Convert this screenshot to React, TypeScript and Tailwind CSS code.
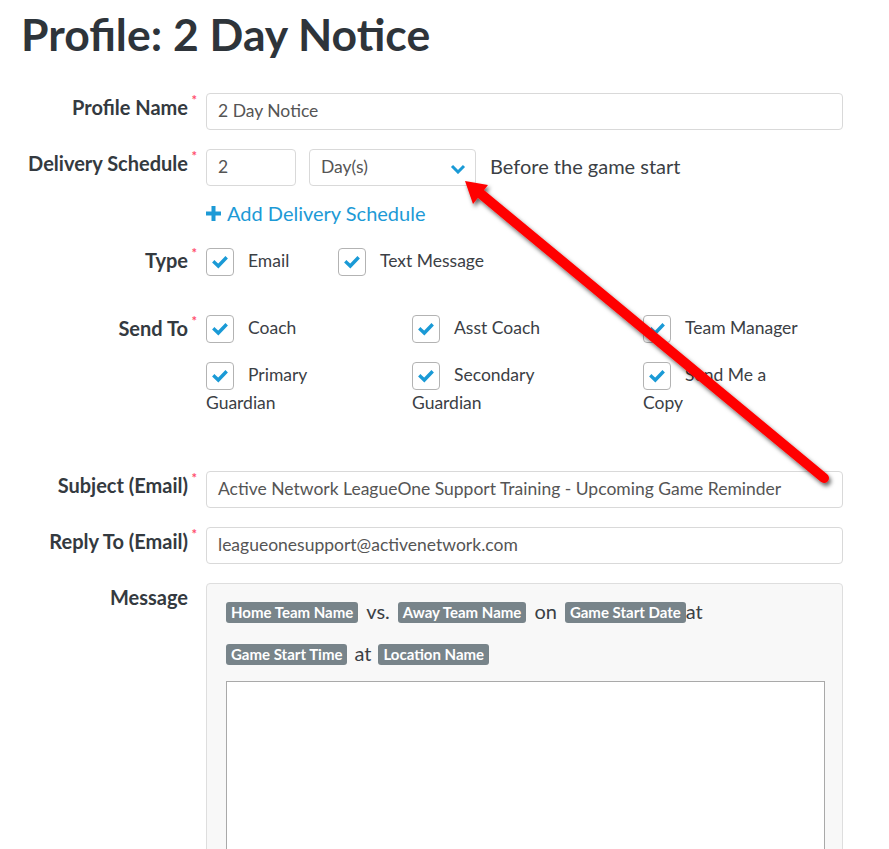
import React from "react";

const Star = () => (
  <span className="absolute right-[-9px] top-[-2px] text-[13px] leading-none text-[#ff4d6d]">*</span>
);

function Label({ text, req = true, pt = "pt-[7px]" }: { text: string; req?: boolean; pt?: string }) {
  return (
    <div className={`w-[188px] shrink-0 text-right ${pt}`}>
      <span className="relative inline-block text-[20px] leading-[22px] font-bold text-[#343a40]">
        {text}
        {req && <Star />}
      </span>
    </div>
  );
}

const Check = () => (
  <div className="flex h-[28px] w-[28px] shrink-0 items-center justify-center rounded-[4px] border border-[#b3b3b3] bg-white">
    <svg width="16" height="14" viewBox="0 0 16 14">
      <path d="M2.5 7.5 L6.3 11 L13.5 3.5" fill="none" stroke="#1a9ad6" strokeWidth="3.4" strokeLinecap="square" />
    </svg>
  </div>
);

function CheckItem({ a, b, w }: { a: string; b?: string; w: string }) {
  return (
    <div className={w}>
      <div className="flex items-center gap-[14px]">
        <Check />
        <span className="mt-[-3px] text-[17.5px] leading-[22px] text-[#3b4045]">{a}</span>
      </div>
      {b && <div className="mt-[2px] text-[17.5px] leading-[22px] text-[#3b4045]">{b}</div>}
    </div>
  );
}

const Tag = ({ t }: { t: string }) => (
  <span className="inline-flex h-[21px] items-center rounded-[3px] bg-[#78848a] px-[5px] text-[15px] font-bold text-white">
    {t}
  </span>
);

const inputCls =
  "h-[37px] rounded-[4px] border border-[#d9d9d9] bg-white px-[11px] flex items-center text-[17.5px] text-[#555]";

export default function App() {
  return (
    <div className="relative h-[849px] w-[889px] overflow-hidden bg-white font-['Lato',sans-serif] text-[#333]">
      <h1 className="pl-[21px] pt-[9px] text-[44.5px] font-bold leading-[50px] text-[#2e343a]">Profile: 2 Day Notice</h1>

      <div className="mt-[34px] pr-[46px]">
        {/* Profile Name */}
        <div className="flex">
          <Label text="Profile Name" pt="pt-[3px]" />
          <div className="ml-[18px] flex-1">
            <div className={inputCls}>2 Day Notice</div>
          </div>
        </div>

        {/* Delivery schedule */}
        <div className="mt-[19px] flex">
          <Label text="Delivery Schedule" pt="pt-[3px]" />
          <div className="ml-[18px] flex-1">
            <div className="flex items-center">
              <div className={`${inputCls} w-[90px]`}>2</div>
              <div className={`${inputCls} ml-[13px] w-[167px] justify-between`}>
                <span>Day(s)</span>
                <svg width="16" height="10" viewBox="0 0 16 10" className="mr-[-2px] mt-[2px]">
                  <path d="M2 2 L8 8 L14 2" fill="none" stroke="#1a9ad6" strokeWidth="3" />
                </svg>
              </div>
              <span className="ml-[14px] mt-[-4px] text-[20px] text-[#3b4045]">Before the game start</span>
            </div>
            <div className="mt-[16px] flex h-[22px] items-center text-[20px] leading-[22px] text-[#1d9ad6]">
              <svg width="15" height="15" viewBox="0 0 15 15" className="mr-[6px]">
                <path d="M7.5 0 V15 M0 7.5 H15" stroke="#1d9ad6" strokeWidth="4" />
              </svg>
              Add Delivery Schedule
            </div>
          </div>
        </div>

        {/* Type */}
        <div className="mt-[24px] flex">
          <Label text="Type" pt="pt-[1px]" />
          <div className="ml-[18px] flex flex-1">
            <CheckItem a="Email" w="w-[132px]" />
            <CheckItem a="Text Message" w="w-[200px]" />
          </div>
        </div>

        {/* Send To */}
        <div className="mt-[39px] flex">
          <Label text="Send To" pt="pt-[2px]" />
          <div className="ml-[18px] flex-1">
            <div className="flex">
              <CheckItem a="Coach" w="w-[206px]" />
              <CheckItem a="Asst Coach" w="w-[231px]" />
              <CheckItem a="Team Manager" w="w-[200px]" />
            </div>
            <div className="mt-[19px] flex">
              <CheckItem a="Primary" b="Guardian" w="w-[206px]" />
              <CheckItem a="Secondary" b="Guardian" w="w-[231px]" />
              <CheckItem a="Send Me a" b="Copy" w="w-[200px]" />
            </div>
          </div>
        </div>

        {/* Subject */}
        <div className="mt-[57px] flex">
          <Label text="Subject (Email)" pt="pt-[3px]" />
          <div className="ml-[18px] flex-1">
            <div className={inputCls}>Active Network LeagueOne Support Training - Upcoming Game Reminder</div>
          </div>
        </div>

        {/* Reply */}
        <div className="mt-[19px] flex">
          <Label text="Reply To (Email)" pt="pt-[3px]" />
          <div className="ml-[18px] flex-1">
            <div className={inputCls}>leagueonesupport@activenetwork.com</div>
          </div>
        </div>

        {/* Message */}
        <div className="mt-[19px] flex">
          <Label text="Message" req={false} pt="pt-[3px]" />
          <div className="ml-[18px] flex-1">
            <div className="h-[300px] rounded-[4px] border border-[#dedede] bg-[#f8f8f8] pl-[19px] pr-[17px] pt-[18px]">
              <div className="flex h-[21px] items-center text-[20px] text-[#3b4045]">
                <Tag t="Home Team Name" />
                <span className="mx-[8px] mt-[-3px]">vs.</span>
                <Tag t="Away Team Name" />
                <span className="mx-[8px] mt-[-3px]">on</span>
                <Tag t="Game Start Date" />
                <span className="mt-[-3px]">at</span>
              </div>
              <div className="mt-[21px] flex h-[21px] items-center text-[20px] text-[#3b4045]">
                <Tag t="Game Start Time" />
                <span className="mx-[7px] mt-[-3px]">at</span>
                <Tag t="Location Name" />
              </div>
              <div className="mt-[16px] h-[240px] border border-[#a9a9a9] bg-white" />
            </div>
          </div>
        </div>
      </div>

      <svg className="pointer-events-none absolute left-0 top-0" width="889" height="849">
        <defs>
          <filter id="sh" x="-10%" y="-10%" width="130%" height="130%">
            <feDropShadow dx="2" dy="3" stdDeviation="2" floodColor="#000" floodOpacity="0.6" />
          </filter>
        </defs>
        <g filter="url(#sh)">
          <line x1="824" y1="478" x2="481" y2="194" stroke="#ff0000" strokeWidth="10" strokeLinecap="round" />
          <polygon points="465,181 488,185 473,204" fill="#ff0000" />
        </g>
      </svg>
    </div>
  );
}
